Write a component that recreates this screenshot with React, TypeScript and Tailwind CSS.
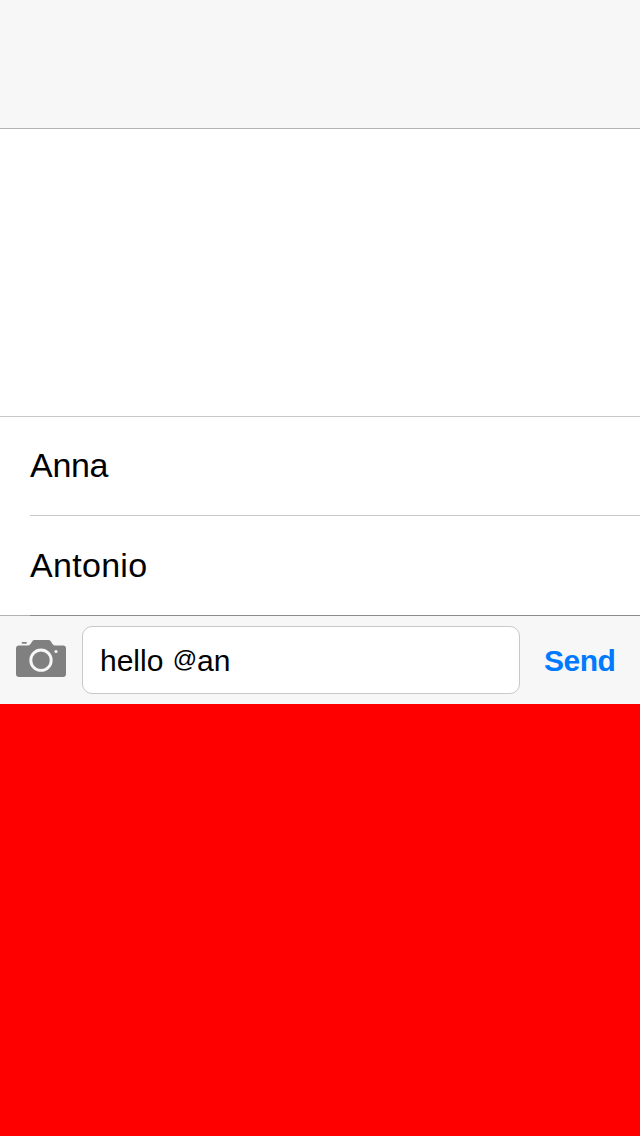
export default function App() {
  return (
    <div className="flex h-[1136px] w-[640px] flex-col overflow-hidden bg-white font-['Liberation_Sans',sans-serif] text-black">
      <header className="h-[129px] shrink-0 border-b border-[#b2b2b2] bg-[#f7f7f7]" />
      <main className="h-[287px] shrink-0" />
      <ul className="shrink-0 border-t border-[#c8c7cc]">
        <li className="ml-[30px] flex h-[99px] items-center border-b border-[#c8c7cc] pb-0.5 text-[34px] tracking-[-0.3px]">
          <span className="leading-none">Anna</span>
        </li>
        <li className="ml-[30px] flex h-[99px] items-center pb-0.5 text-[34px] tracking-[0.3px]">
          <span className="leading-none">Antonio</span>
        </li>
      </ul>
      <div className="h-px shrink-0 bg-[#b2b2b2] pl-[30px]">
        <div className="h-px bg-[#8b8b8d]" />
      </div>
      <div className="flex h-[88px] shrink-0 items-start bg-[#f7f7f7]">
        <svg className="mt-6 ml-4 h-[38px] w-[50px] shrink-0" viewBox="0 0 50 38" fill="none">
          <path fill="#808080" d="M3 5.500H11.500Q13.500 5.500 14.500 4L16.500 1Q17.200 0 18.500 0H32.500Q33.800 0 34.600 1L36.500 4Q37.400 5.500 39.500 5.500H47Q50 5.500 50 8.500V34Q50 37 47 37H3Q0 37 0 34V8.500Q0 5.500 3 5.500Z" />
          <rect x="5.700" y="2" width="5.100" height="1.800" rx="0.800" fill="#808080" />
          <circle cx="25" cy="20.200" r="10.200" stroke="#f7f7f7" strokeWidth="2.900" />
          <circle cx="40" cy="11.500" r="1.600" fill="#f7f7f7" />
        </svg>
        <div className="mt-[10px] ml-4 flex h-[68px] w-[438px] items-center rounded-[10px] border border-[#c8c8cd] bg-white pt-0.5 pl-[17px] text-[30px]">
          <span className="leading-none whitespace-pre">
            hello <span className="ml-px align-[4px] text-[24px] leading-none">@</span>an
          </span>
        </div>
        <button className="mt-[30px] ml-6 text-[30px] leading-none font-bold tracking-[-0.5px] text-[#007aff]">Send</button>
      </div>
      <div className="flex-1 bg-[#ff0000]" />
    </div>
  );
}
